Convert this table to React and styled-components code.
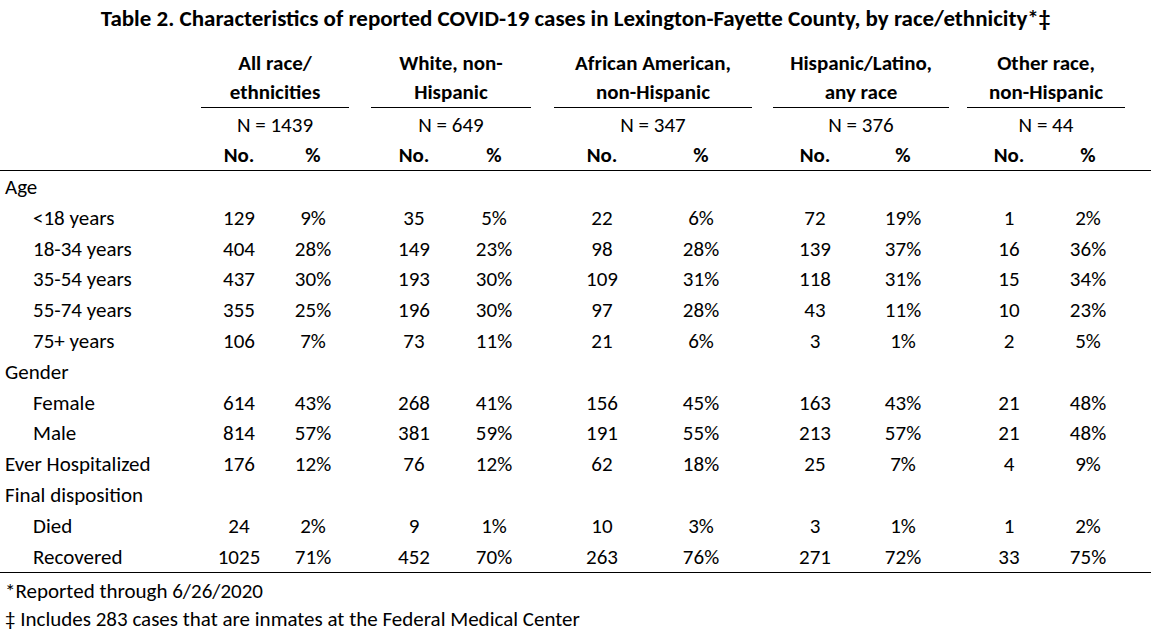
import styled, { createGlobalStyle } from "styled-components";

const GlobalStyle = createGlobalStyle`
	body {
		margin: 0;
		background: #ffffff;
		color: #000000;
		font-family: Carlito, Calibri, Lato, "Liberation Sans", sans-serif;
	}
`;

const columns =
	"201px 76px 72px 22px 86px 74px 23px 96px 102px 21px 84px 92px 18px 84px 74px 1fr";

const groups = [
	{ title: ["All race/", "ethnicities"], n: 1439 },
	{ title: ["White, non-", "Hispanic"], n: 649 },
	{ title: ["African American,", "non-Hispanic"], n: 347 },
	{ title: ["Hispanic/Latino,", "any race"], n: 376 },
	{ title: ["Other race,", "non-Hispanic"], n: 44 },
];

const rows = [
	{ label: "Age" },
	{ label: "<18 years", indent: true, values: [[129, "9%"], [35, "5%"], [22, "6%"], [72, "19%"], [1, "2%"]] },
	{ label: "18-34 years", indent: true, values: [[404, "28%"], [149, "23%"], [98, "28%"], [139, "37%"], [16, "36%"]] },
	{ label: "35-54 years", indent: true, values: [[437, "30%"], [193, "30%"], [109, "31%"], [118, "31%"], [15, "34%"]] },
	{ label: "55-74 years", indent: true, values: [[355, "25%"], [196, "30%"], [97, "28%"], [43, "11%"], [10, "23%"]] },
	{ label: "75+ years", indent: true, values: [[106, "7%"], [73, "11%"], [21, "6%"], [3, "1%"], [2, "5%"]] },
	{ label: "Gender" },
	{ label: "Female", indent: true, values: [[614, "43%"], [268, "41%"], [156, "45%"], [163, "43%"], [21, "48%"]] },
	{ label: "Male", indent: true, values: [[814, "57%"], [381, "59%"], [191, "55%"], [213, "57%"], [21, "48%"]] },
	{ label: "Ever Hospitalized", values: [[176, "12%"], [76, "12%"], [62, "18%"], [25, "7%"], [4, "9%"]] },
	{ label: "Final disposition" },
	{ label: "Died", indent: true, values: [[24, "2%"], [9, "1%"], [10, "3%"], [3, "1%"], [1, "2%"]] },
	{ label: "Recovered", indent: true, values: [[1025, "71%"], [452, "70%"], [263, "76%"], [271, "72%"], [33, "75%"]] },
];

const Page = styled.div`
	width: 1151px;
	font-size: 21px;
`;

const Title = styled.h1`
	margin: 0 0 16px 0;
	padding-top: 3px;
	font-size: 23px;
	font-weight: 700;
	line-height: 30px;
	text-align: center;
	white-space: nowrap;
`;

const Row = styled.div`
	display: grid;
	grid-template-columns: ${columns};
	line-height: ${(p) => p.$height || "30.8px"};
	border-bottom: ${(p) => (p.$rule ? "1px solid #000" : "none")};
	padding-top: ${(p) => p.$top || "0"};
`;

const GroupHead = styled.div`
	grid-column: ${(p) => p.$col} / span 2;
	text-align: center;
	line-height: 29px;
	white-space: nowrap;
	border-bottom: ${(p) => (p.$line ? "1px solid #000" : "none")};
	font-weight: ${(p) => (p.$bold ? 700 : 400)};
`;

const Cell = styled.div`
	grid-column: ${(p) => p.$col};
	text-align: center;
	white-space: nowrap;
	font-weight: ${(p) => (p.$bold ? 700 : 400)};
`;

const Label = styled.div`
	grid-column: 1;
	padding-left: ${(p) => (p.$indent ? "33px" : "5px")};
	white-space: nowrap;
`;

const Notes = styled.div`
	padding: 4px 0 0 5px;
	line-height: 28px;
`;

export default function App() {
	return (
		<Page>
			<GlobalStyle />
			<Title>
				Table 2. Characteristics of reported COVID-19 cases in Lexington-Fayette County, by
				race/ethnicity*‡
			</Title>

			<Row $height="29px">
				{groups.map((g, i) => (
					<GroupHead key={g.n} $col={2 + 3 * i} $line $bold>
						{g.title[0]}
						<br />
						{g.title[1]}
					</GroupHead>
				))}
			</Row>

			<Row $height="30px" $top="3px">
				{groups.map((g, i) => (
					<GroupHead key={g.n} $col={2 + 3 * i}>
						N = {g.n}
					</GroupHead>
				))}
			</Row>

			<Row $height="30px" $rule>
				{groups.map((g, i) => [
					<Cell key={"no" + i} $col={2 + 3 * i} $bold>
						No.
					</Cell>,
					<Cell key={"pc" + i} $col={3 + 3 * i} $bold>
						%
					</Cell>,
				])}
			</Row>

			{rows.map((r, idx) => (
				<Row key={r.label} $rule={idx === rows.length - 1} $top={idx === 0 ? "1px" : "0"}>
					<Label $indent={r.indent}>{r.label}</Label>
					{r.values &&
						r.values.map((v, i) => [
							<Cell key={"n" + i} $col={2 + 3 * i}>
								{v[0]}
							</Cell>,
							<Cell key={"p" + i} $col={3 + 3 * i}>
								{v[1]}
							</Cell>,
						])}
				</Row>
			))}

			<Notes>
				*Reported through 6/26/2020
				<br />‡ Includes 283 cases that are inmates at the Federal Medical Center
			</Notes>
		</Page>
	);
}
